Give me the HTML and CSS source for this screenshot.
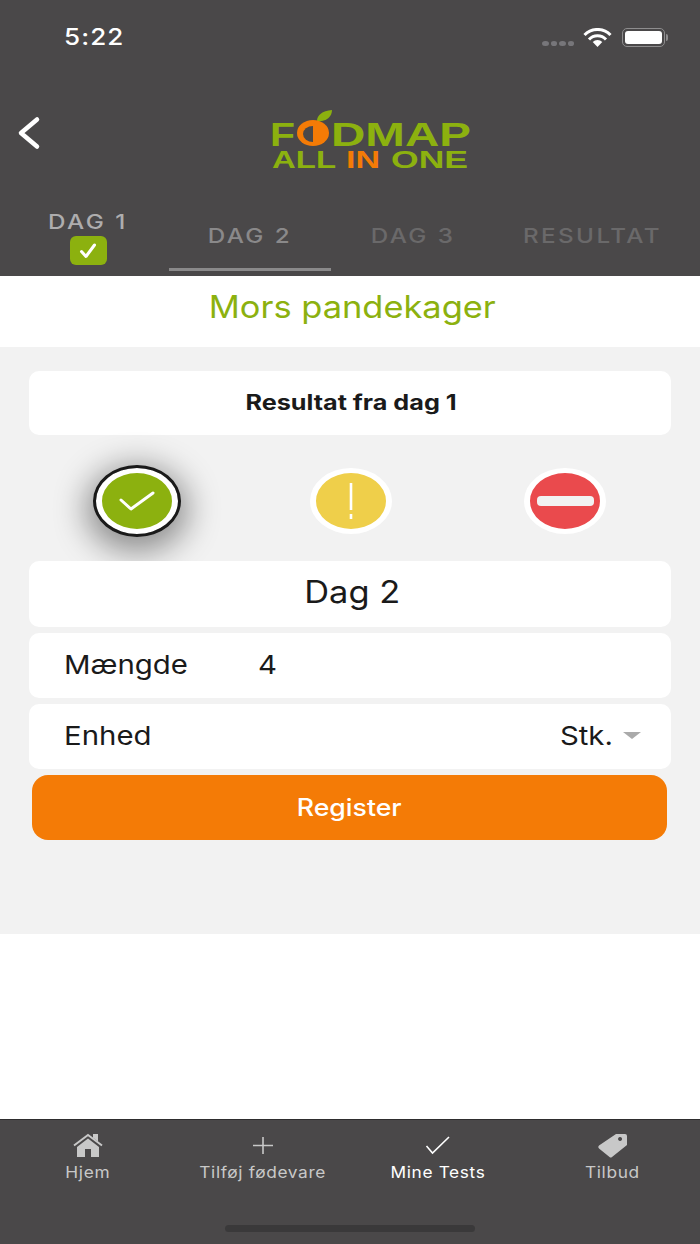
FILE: index.html
```html
<!DOCTYPE html>
<html>

<head>
    <title>Mors pandekager</title>
    <meta name="viewport" content="width=device-width, initial-scale=1">
    <link rel="stylesheet" href="styles.css">
</head>
<body>
    <div class="screen">
        <header class="top">
            <div class="status">
                <span class="time">5:22</span>
                <div class="status-icons">
                    <span class="dots"><i></i><i></i><i></i><i></i></span>
                    <svg class="wifi" width="29" height="19" viewBox="0 0 29 19">
                        <path d="M1.5 7a18 18 0 0 1 26 0M6 11.5a11.500 11.500 0 0 1 17 0" fill="none" stroke="#fff" stroke-width="3"/>
                        <path d="M14.500 19l-4.800-5a6.800 6.800 0 0 1 9.600 0z" fill="#fff"/>
                    </svg>
                    <span class="battery"><b></b></span>
                </div>
            </div>

            <div class="brand-row">
                <svg class="back" width="26" height="34" viewBox="0 0 26 34">
                    <path d="M21 3.500L5 17l16 13.500" fill="none" stroke="#fff" stroke-width="4.500" stroke-linecap="round" stroke-linejoin="round"/>
                </svg>
                <svg class="logo" width="204" height="66" viewBox="0 0 204 66">
                    <path d="M50 15c0-6 5-10 15-11 0 7-6 12-15 11z" fill="#8cb10f"/>
                    <text class="logo-big" x="3" y="40" textLength="25" lengthAdjust="spacingAndGlyphs">F</text>
                    <ellipse cx="46" cy="27" rx="16" ry="13" fill="#f47b06"/>
                    <path d="M46 20a10 8 0 0 0 0 16z" fill="#4a4849"/>
                    <text class="logo-big" x="64" y="40" textLength="140" lengthAdjust="spacingAndGlyphs">DMAP</text>
                    <text class="logo-small" x="5" y="62" textLength="64" lengthAdjust="spacingAndGlyphs">ALL</text>
                    <text class="logo-small logo-orange" x="79" y="62" textLength="34" lengthAdjust="spacingAndGlyphs">IN</text>
                    <text class="logo-small" x="124" y="62" textLength="77" lengthAdjust="spacingAndGlyphs">ONE</text>
                </svg>
            </div>

            <nav class="tabs">
                <div class="tab tab-done">
                    <span class="tab-text">DAG 1</span>
                    <span class="tab-check">
                        <svg width="18" height="16" viewBox="0 0 18 16"><path d="M2.500 8.500l4.500 5L15.500 2" fill="none" stroke="#fff" stroke-width="3" stroke-linecap="round" stroke-linejoin="round"/></svg>
                    </span>
                </div>
                <div class="tab tab-active"><span class="tab-text">DAG 2</span></div>
                <div class="tab"><span class="tab-text">DAG 3</span></div>
                <div class="tab"><span class="tab-text">RESULTAT</span></div>
            </nav>
        </header>

        <h1 class="title"><span class="wide">Mors pandekager</span></h1>

        <main class="panel">
            <div class="card card-result"><span class="wider">Resultat fra dag 1</span></div>

            <div class="ratings">
                <div class="rating rating-good rating-selected">
                    <svg width="36" height="20" viewBox="0 0 36 20"><path d="M2 9l10 9L34 2" fill="none" stroke="#fff" stroke-width="3" stroke-linecap="round" stroke-linejoin="round"/></svg>
                </div>
                <div class="rating rating-warn">
                    <svg width="6" height="36" viewBox="0 0 6 36"><path d="M3 0v27M3 31v5" fill="none" stroke="#fff" stroke-width="2.600"/></svg>
                </div>
                <div class="rating rating-stop"><span class="stop-bar"></span></div>
            </div>

            <div class="card card-day"><span class="wide">Dag 2</span></div>
            <div class="card card-row">
                <span class="row-label">Mængde</span>
                <span class="row-value">4</span>
            </div>
            <div class="card card-row card-unit">
                <span class="row-label">Enhed</span>
                <span class="unit-pick"><span class="unit-text">Stk.</span><i class="caret"></i></span>
            </div>
            <button class="register"><span class="wide">Register</span></button>
        </main>

        <div class="blank"></div>

        <footer class="tabbar">
            <div class="bar-items">
                <div class="bar-item">
                    <svg width="32" height="26" viewBox="0 0 32 26">
                        <path d="M2 12.500L16 2l14 10.500" fill="none" stroke="#c8c8c8" stroke-width="2"/>
                        <path d="M21 1h5v7.500l-5-3.700z" fill="#c8c8c8"/>
                        <path fill-rule="evenodd" d="M5 14L16 5.500 27 14v10H5zM13 16v8h6v-8z" fill="#c8c8c8"/>
                    </svg>
                    <span class="bar-text">Hjem</span>
                </div>
                <div class="bar-item">
                    <svg width="32" height="26" viewBox="0 0 32 26"><path d="M16 4v17M6 12.500h20" fill="none" stroke="#c8c8c8" stroke-width="1.600"/></svg>
                    <span class="bar-text">Tilføj fødevare</span>
                </div>
                <div class="bar-item bar-current">
                    <svg width="32" height="26" viewBox="0 0 32 26"><path d="M4.500 13l6 7L27 4" fill="none" stroke="#fff" stroke-width="1.600"/></svg>
                    <span class="bar-text">Mine Tests</span>
                </div>
                <div class="bar-item">
                    <svg width="32" height="26" viewBox="0 0 32 26">
                        <path fill-rule="evenodd" d="M19 1h9a2 2 0 0 1 2 2v9L15 24a2 2 0 0 1-2.500 0L2 15.500a2 2 0 0 1 0-3zM23 4a2 2 0 1 0 .1 0z" fill="#c8c8c8"/>
                    </svg>
                    <span class="bar-text">Tilbud</span>
                </div>
            </div>
            <div class="home-line"></div>
        </footer>
    </div>
</body>

</html>
```

FILE: styles.css
```css
* {
    box-sizing: border-box;
}

body {
    margin: 0;
    padding: 0;
    font-family: Inter, Roboto, sans-serif;
    background-color: #ffffff;
}

.screen {
    display: flex;
    flex-direction: column;
    width: 700px;
    height: 1244px;
    overflow: hidden;
}

/* the app's type runs wider than the font does */
.wide {
    display: inline-block;
    transform: scaleX(1.11);
}

.wider {
    display: inline-block;
    transform: scaleX(1.2);
}

/* header */
.top {
    display: flex;
    flex-direction: column;
    height: 276px;
    background-color: #4a4849;
}

.status {
    display: flex;
    justify-content: space-between;
    align-items: center;
    height: 24px;
    margin-top: 25px;
    padding: 0 35px 0 64px;
}

.time {
    color: #ffffff;
    font-size: 23px;
    font-weight: 500;
    letter-spacing: 1px;
    transform: scaleX(1.13);
    transform-origin: left center;
}

.status-icons {
    display: flex;
    align-items: center;
}

.dots {
    display: flex;
    gap: 2px;
    margin-top: 12px;
    margin-right: 9px;
}

.dots i {
    width: 6.5px;
    height: 5px;
    border-radius: 50%;
    background-color: #77767a;
}

.battery {
    position: relative;
    width: 43px;
    height: 19px;
    padding: 2px;
    margin-left: 10px;
    border: 1px solid #8e8d8e;
    border-radius: 5px;
}

.battery::after {
    content: "";
    position: absolute;
    top: 5px;
    right: -4px;
    width: 2px;
    height: 7px;
    border-radius: 0 2px 2px 0;
    background-color: #8e8d8e;
}

.battery b {
    display: block;
    height: 100%;
    border-radius: 3px;
    background-color: #ffffff;
}

.brand-row {
    display: flex;
    align-items: center;
    height: 66px;
    margin-top: 60px;
    padding-left: 16px;
}

.back {
    margin-top: -18px;
}

.logo {
    margin-left: 225px;
    margin-top: -6px;
}

.logo-big {
    font-family: "Liberation Sans", sans-serif;
    font-size: 33px;
    font-weight: 700;
    fill: #8cb10f;
}

.logo-small {
    font-family: "Liberation Sans", sans-serif;
    font-size: 24px;
    font-weight: 700;
    fill: #8cb10f;
}

.logo-orange {
    fill: #f47b06;
}

.tabs {
    display: grid;
    grid-template-columns: 169px 162px 163px 198px;
    height: 67px;
    margin-top: 34px;
}

.tab {
    display: flex;
    align-items: center;
    justify-content: center;
    padding-bottom: 13px;
    color: #6a696a;
    font-size: 20px;
    font-weight: 500;
    letter-spacing: 2px;
}

.tab-text {
    display: inline-block;
    transform: scaleX(1.21);
}

.tab-done {
    flex-direction: column;
    justify-content: flex-start;
    padding: 1px 0 0 7px;
    color: #aeadae;
}

.tab-active {
    height: 57px;
    margin-top: 5px;
    padding-bottom: 10px;
    color: #8a898a;
    border-bottom: 3px solid #8a898a;
}

.tab-check {
    display: flex;
    align-items: center;
    justify-content: center;
    width: 37px;
    height: 29px;
    margin-top: 2px;
    border-radius: 6px;
    background-color: #8cb10f;
}

/* title */
.title {
    display: flex;
    align-items: center;
    justify-content: center;
    height: 71px;
    margin: 0;
    padding: 0 0 10px 4px;
    color: #8cb10f;
    font-size: 31px;
    font-weight: 400;
}

/* grey panel */
.panel {
    display: flex;
    flex-direction: column;
    align-items: center;
    height: 587px;
    padding: 24px 29px 0;
    background-color: #f2f2f2;
}

.card {
    display: flex;
    align-items: center;
    width: 100%;
    background-color: #ffffff;
    border-radius: 10px;
    color: #1a1a1a;
}

.card-result {
    justify-content: center;
    height: 64px;
    padding: 0 0 2px 2px;
    font-size: 21px;
    font-weight: 700;
}

.ratings {
    display: grid;
    grid-template-columns: 216px 212px 214px;
    width: 100%;
    height: 126px;
    padding-top: 6px;
    align-items: center;
    justify-items: center;
}

.rating {
    display: flex;
    align-items: center;
    justify-content: center;
    width: 82px;
    height: 66px;
    border-style: solid;
    border-color: #ffffff;
    border-width: 5px 6px;
    border-radius: 50%;
}

.rating-good {
    background-color: #8cb10f;
}

.rating-selected {
    outline: 3px solid #1a1a1a;
    box-shadow: 0 8px 32px 10px rgba(0, 0, 0, 0.42);
}

.rating-warn {
    background-color: #efcf4a;
}

.rating-stop {
    margin-left: 2px;
    background-color: #ea4a4d;
}

.stop-bar {
    width: 57px;
    height: 10px;
    border-radius: 4px;
    background-color: #f2f2f2;
}

.card-day {
    justify-content: center;
    height: 66px;
    padding: 0 0 5px 4px;
    font-size: 31px;
}

.card-row {
    height: 65px;
    margin-top: 6px;
    padding: 0 30px 2px 35px;
    font-size: 26px;
}

.row-label {
    width: 194px;
    transform: scaleX(1.13);
    transform-origin: left center;
}

.row-value {
    transform: scaleX(1.13);
    transform-origin: left center;
}

.card-unit {
    justify-content: space-between;
}

.unit-pick {
    display: flex;
    align-items: center;
    gap: 10px;
}

.unit-text {
    transform: scaleX(1.13);
    transform-origin: right center;
}

.caret {
    width: 0;
    height: 0;
    border-left: 9px solid transparent;
    border-right: 9px solid transparent;
    border-top: 7px solid #aaaaaa;
}

.register {
    width: 635px;
    height: 65px;
    margin-top: 6px;
    margin-right: 1px;
    border: none;
    border-radius: 16px;
    background-color: #f47b06;
    color: #ffffff;
    font-family: Inter, Roboto, sans-serif;
    font-size: 24px;
    font-weight: 500;
}

.blank {
    height: 185px;
}

/* bottom tabs */
.tabbar {
    position: relative;
    height: 125px;
    background-color: #4a4849;
    border-top: 1px solid #2e2d2e;
}

.bar-items {
    display: grid;
    grid-template-columns: repeat(4, 175px);
    padding-top: 13px;
}

.bar-item {
    display: flex;
    flex-direction: column;
    align-items: center;
    gap: 3px;
    color: #c8c8c8;
    font-size: 16px;
    letter-spacing: 0.6px;
}

.bar-text {
    transform: scaleX(1.08);
}

.bar-current {
    color: #ffffff;
}

.home-line {
    position: absolute;
    left: 225px;
    bottom: 12px;
    width: 250px;
    height: 7px;
    border-radius: 4px;
    background-color: #3a393a;
}
```
